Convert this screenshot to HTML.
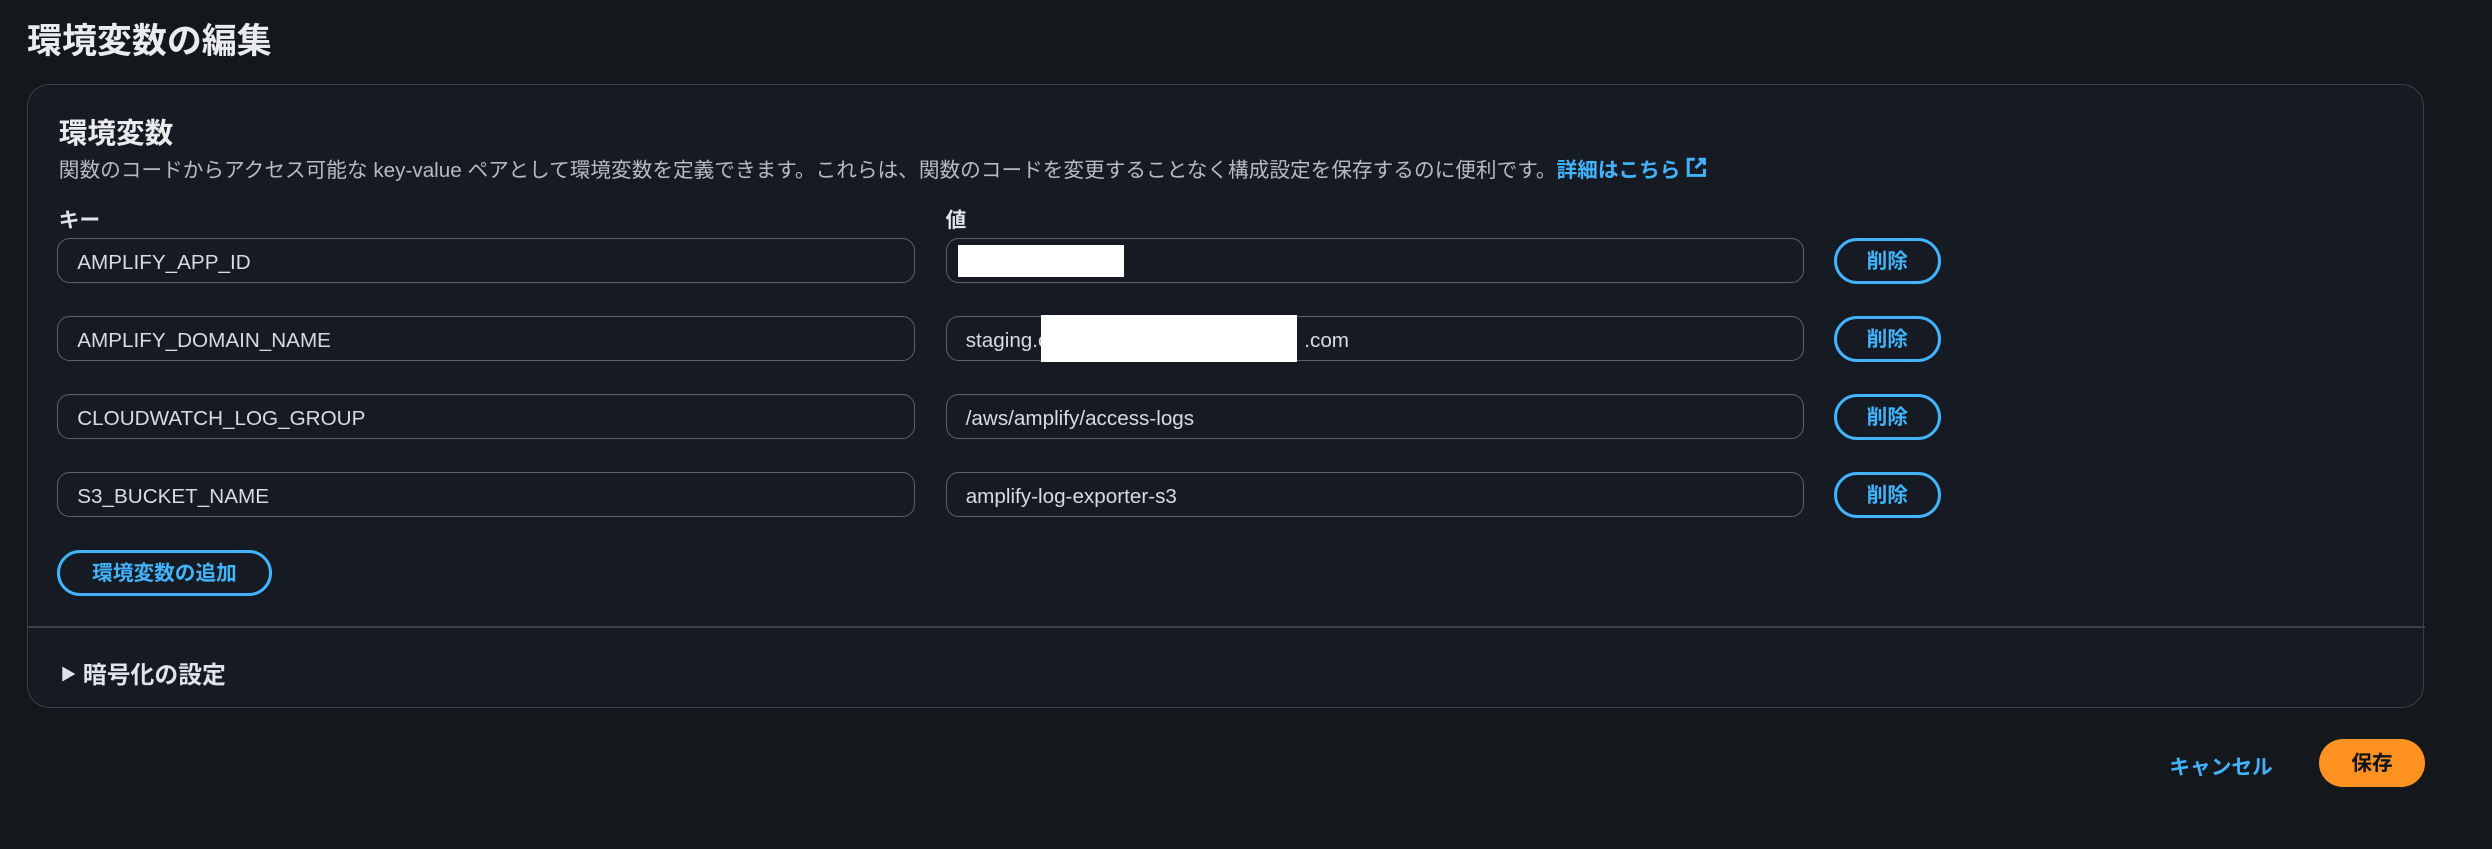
<!DOCTYPE html>
<html><head><meta charset="utf-8"><style>
html,body{margin:0;padding:0;background:#14171c;}
body{width:2492px;height:848px;overflow:hidden;}
#w{zoom:1.58929;width:1568px;height:534px;position:relative;font-family:"Liberation Sans","Noto Sans CJK JP",sans-serif;color:#d1d5db;}
.a{position:absolute;}
h1{position:absolute;left:17px;top:8px;margin:0;font-size:22px;font-weight:700;color:#e9ebed;}
.card{left:17px;top:53px;width:1507px;height:391px;border:1px solid #3b4048;border-radius:14px;background:#161a22;}
.h2{left:37px;top:70px;font-size:18px;font-weight:700;color:#e9ebed;}
.desc{left:37px;top:96px;font-size:13px;color:#b4bbc5;white-space:nowrap;}
.desc a{color:#42b4ff;font-weight:700;text-decoration:none;}
.lbl{font-size:13px;font-weight:700;color:#e0e3e7;top:128px;}
.in{height:28px;border:1px solid #5b6270;border-radius:8px;box-sizing:border-box;font-size:13px;color:#d8dce1;line-height:30px;padding-left:12px;white-space:nowrap;}
.k{left:36px;width:540px;}
.v{left:595px;width:540px;}
.del{left:1154px;width:67px;height:29px;border:2px solid #42b4ff;border-radius:15px;box-sizing:border-box;color:#42b4ff;font-size:13px;font-weight:700;text-align:center;line-height:26px;}
.wb{background:#fff;}
</style></head><body><div id="w">
<h1>環境変数の編集</h1>
<div class="a card"></div>
<div class="a h2">環境変数</div>
<div class="a desc">関数のコードからアクセス可能な key-value ペアとして環境変数を定義できます。これらは、関数のコードを変更することなく構成設定を保存するのに便利です。<a>詳細はこちら <svg width="13" height="13" viewBox="0 0 14 14" style="vertical-align:-1px"><path d="M6 1.5H1.5v11h11V8" fill="none" stroke="#42b4ff" stroke-width="2"/><path d="M8.5 1.5h4v4M12.5 1.5 6.5 7.5" fill="none" stroke="#42b4ff" stroke-width="2"/></svg></a></div>
<div class="a lbl" style="left:37px">キー</div>
<div class="a lbl" style="left:595px">値</div>

<div class="a in k" style="top:150px">AMPLIFY_APP_ID</div>
<div class="a in v" style="top:150px"></div>
<div class="a wb" style="left:603px;top:154px;width:104px;height:20px"></div>
<div class="a del" style="top:150px">削除</div>

<div class="a in k" style="top:199px">AMPLIFY_DOMAIN_NAME</div>
<div class="a in v" style="top:199px">staging.c<span style="display:inline-block;width:161px"></span>.com</div>
<div class="a wb" style="left:655px;top:198px;width:161px;height:30px"></div>
<div class="a del" style="top:199px">削除</div>

<div class="a in k" style="top:248px">CLOUDWATCH_LOG_GROUP</div>
<div class="a in v" style="top:248px">/aws/amplify/access-logs</div>
<div class="a del" style="top:248px">削除</div>

<div class="a in k" style="top:297px">S3_BUCKET_NAME</div>
<div class="a in v" style="top:297px">amplify-log-exporter-s3</div>
<div class="a del" style="top:297px">削除</div>

<div class="a del" style="left:36px;top:346px;width:135px">環境変数の追加</div>
<div class="a" style="left:17px;top:394px;width:1509px;height:1px;background:#3b4048"></div>
<div class="a" style="left:38px;top:412px;font-size:15px;font-weight:700;color:#e0e3e7"><span style="font-size:10px;vertical-align:2px">▶</span> 暗号化の設定</div>
<div class="a" style="left:1365px;top:472px;font-size:13px;font-weight:700;color:#42b4ff">キャンセル</div>
<div class="a" style="left:1459px;top:465px;width:67px;height:30px;border-radius:15px;background:#ff9220;color:#0f141a;font-size:13px;font-weight:700;text-align:center;line-height:31px">保存</div>
</div></body></html>
